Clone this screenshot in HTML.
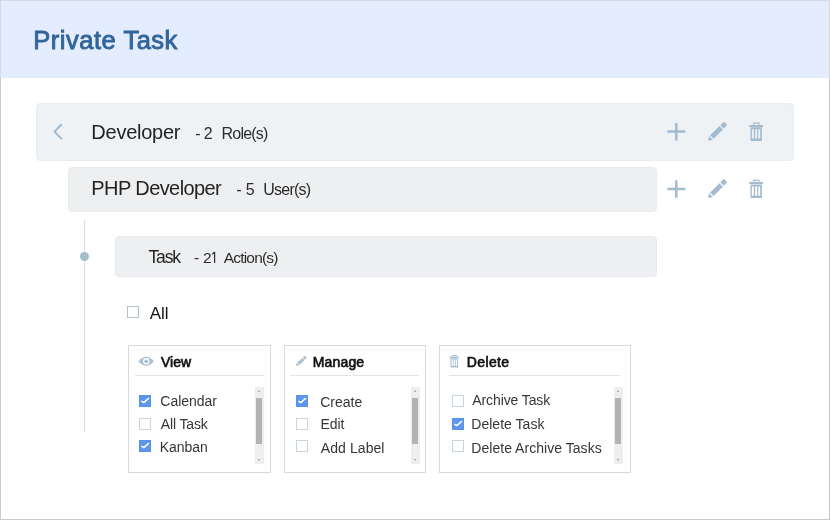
<!DOCTYPE html>
<html><head><meta charset="utf-8">
<style>
*{margin:0;padding:0;box-sizing:border-box}
html,body{width:830px;height:520px;overflow:hidden;background:#fff}
body{font-family:"Liberation Sans",sans-serif;color:#333;position:relative}
.a{position:absolute;white-space:nowrap;line-height:1}
#txt{position:absolute;left:0;top:0;width:830px;height:520px;will-change:transform}
svg.a{line-height:0}
#frame{position:absolute;left:0;top:0;width:830px;height:520px;border:1px solid #cacaca}
#hdr{position:absolute;left:0;top:0;width:830px;height:78px;background:#e4edfe;border:1px solid #d5dae2;border-bottom:0}
.bar{position:absolute;border-radius:4px}
#dev{left:36px;top:103px;width:758px;height:58px;background:#eff2f5;border:1px solid #e9edf1}
#php{left:68px;top:167px;width:589px;height:45px;background:#eeeff1;border:1px solid #e9ecef}
#task{left:115px;top:236px;width:542px;height:41px;background:#eeeff1;border:1px solid #e6eaee}
#tline{position:absolute;left:84px;top:220px;width:1px;height:212px;background:#d6dee5}
#tdot{position:absolute;left:80px;top:252px;width:9px;height:9px;border-radius:50%;background:#a2bdcb}
.cb{position:absolute;width:12px;height:12px;border:1px solid #c6d5e0;background:#fff}
.cb.on{background:#5c97eb;border-color:#5893e8}
.cb svg{position:absolute;left:-1px;top:-1px}
.box{position:absolute;top:345px;height:128px;border:1px solid #d9d9d9;background:#fff}
.sep{position:absolute;top:375px;height:1px;background:#e4e4e4}
.sb{position:absolute;top:387px;width:9px;height:77px;background:#eeeeee}
.sb .th{position:absolute;left:1px;top:11px;width:6px;height:46px;background:#b3b3b3}
.sb .up,.sb .dn{position:absolute;left:3px;width:0;height:0;border-left:1.5px solid transparent;border-right:1.5px solid transparent}
.sb .up{top:3px;border-bottom:2px solid #999}
.sb .dn{bottom:3px;border-top:2px solid #999}
</style></head><body>
<div id="frame"></div>
<div id="hdr"></div>

<div class="bar" id="dev"></div>
<svg class="a" style="left:46px;top:117px" width="24" height="30" viewBox="0 0 24 30"><path d="M15.1 7.8 L8.5 14.7 L15.3 21.6" fill="none" stroke="#a0bbd0" stroke-width="2" stroke-linecap="round" stroke-linejoin="round"/></svg>
<div class="bar" id="php"></div>

<div id="tline"></div>
<div id="tdot"></div>
<div class="bar" id="task"></div>

<div class="cb" style="left:127px;top:306px;border-color:#adc3d4"></div>

<div class="box" style="left:128px;width:143px"></div>
<div class="sep" style="left:135px;width:129px"></div>
<div class="sb" style="left:255px"><div class="up"></div><div class="th"></div><div class="dn"></div></div>
<div class="cb on" style="left:139px;top:395px"><svg width="12" height="12" viewBox="0 0 12 12"><path d="M2.8 6.3 L4.8 7.6 L9.6 3.4" fill="none" stroke="#fff" stroke-width="1.4" stroke-linecap="round" stroke-linejoin="round"/></svg></div>
<div class="cb" style="left:139px;top:418px"></div>
<div class="cb on" style="left:139px;top:440px"><svg width="12" height="12" viewBox="0 0 12 12"><path d="M2.8 6.3 L4.8 7.6 L9.6 3.4" fill="none" stroke="#fff" stroke-width="1.4" stroke-linecap="round" stroke-linejoin="round"/></svg></div>

<div class="box" style="left:284px;width:142px"></div>
<div class="sep" style="left:290px;width:129px"></div>
<div class="sb" style="left:410.5px"><div class="up"></div><div class="th"></div><div class="dn"></div></div>
<div class="cb on" style="left:296px;top:395px"><svg width="12" height="12" viewBox="0 0 12 12"><path d="M2.8 6.3 L4.8 7.6 L9.6 3.4" fill="none" stroke="#fff" stroke-width="1.4" stroke-linecap="round" stroke-linejoin="round"/></svg></div>
<div class="cb" style="left:296px;top:418px"></div>
<div class="cb" style="left:296px;top:440px"></div>

<div class="box" style="left:439px;width:192px"></div>
<div class="sep" style="left:449px;width:171px"></div>
<div class="sb" style="left:614px"><div class="up"></div><div class="th"></div><div class="dn"></div></div>
<div class="cb" style="left:452px;top:395px"></div>
<div class="cb on" style="left:452px;top:418px"><svg width="12" height="12" viewBox="0 0 12 12"><path d="M2.8 6.3 L4.8 7.6 L9.6 3.4" fill="none" stroke="#fff" stroke-width="1.4" stroke-linecap="round" stroke-linejoin="round"/></svg></div>
<div class="cb" style="left:452px;top:440px"></div>

<div id="txt">
<div class="a" style="left:33.24px;top:27.71px;font-size:25.5px;letter-spacing:0.52px;color:#32659b;-webkit-text-stroke:0.9px #32659b">Private Task</div>
<div class="a" style="left:91.37px;top:121.91px;font-size:20px;letter-spacing:-0.25px;color:#232323;">Developer</div>
<div class="a" style="left:195.27px;top:125.90px;font-size:16px;color:#2c2c2c;">-</div>
<div class="a" style="left:203.63px;top:125.90px;font-size:16px;color:#2c2c2c;">2</div>
<div class="a" style="left:221.59px;top:125.90px;font-size:16px;letter-spacing:-0.81px;color:#2c2c2c;">Role(s)</div>
<div class="a" style="left:91.37px;top:177.91px;font-size:20px;letter-spacing:-0.59px;color:#232323;">PHP Developer</div>
<div class="a" style="left:236.27px;top:181.90px;font-size:16px;color:#2c2c2c;">-</div>
<div class="a" style="left:245.84px;top:181.90px;font-size:16px;color:#2c2c2c;">5</div>
<div class="a" style="left:263.29px;top:181.90px;font-size:16px;letter-spacing:-0.77px;color:#2c2c2c;">User(s)</div>
<div class="a" style="left:148.41px;top:249.11px;font-size:17.5px;letter-spacing:-1.10px;color:#232323;">Task</div>
<div class="a" style="left:194.07px;top:250.10px;font-size:15.5px;color:#2c2c2c;">-</div>
<div class="a" style="left:202.99px;top:250.10px;font-size:15.5px;color:#2c2c2c;">2</div>
<div class="a" style="left:223.68px;top:250.10px;font-size:15.5px;letter-spacing:-0.80px;color:#2c2c2c;">Action(s)</div>
<div class="a" style="left:149.85px;top:304.72px;font-size:17px;letter-spacing:-0.13px;color:#151515;">All</div>
<div class="a" style="left:160.90px;top:355.10px;font-size:14px;letter-spacing:0.02px;color:#111;-webkit-text-stroke:0.65px #111">View</div>
<div class="a" style="left:312.80px;top:355.31px;font-size:14px;letter-spacing:0.14px;color:#111;-webkit-text-stroke:0.65px #111">Manage</div>
<div class="a" style="left:466.79px;top:355.31px;font-size:14px;letter-spacing:0.38px;color:#111;-webkit-text-stroke:0.65px #111">Delete</div>
<div class="a" style="left:160.36px;top:394.20px;font-size:14px;letter-spacing:-0.04px;color:#363636;">Calendar</div>
<div class="a" style="left:160.83px;top:417.10px;font-size:14px;letter-spacing:-0.15px;color:#363636;">All Task</div>
<div class="a" style="left:159.82px;top:440.01px;font-size:14px;letter-spacing:-0.05px;color:#363636;">Kanban</div>
<div class="a" style="left:320.20px;top:394.60px;font-size:14px;letter-spacing:0.01px;color:#363636;">Create</div>
<div class="a" style="left:320.62px;top:417.01px;font-size:14px;letter-spacing:-0.14px;color:#363636;">Edit</div>
<div class="a" style="left:320.86px;top:440.81px;font-size:14px;letter-spacing:0.07px;color:#363636;">Add Label</div>
<div class="a" style="left:472.32px;top:393.10px;font-size:14px;letter-spacing:-0.11px;color:#363636;">Archive Task</div>
<div class="a" style="left:471.26px;top:417.01px;font-size:14px;letter-spacing:0.03px;color:#363636;">Delete Task</div>
<div class="a" style="left:471.26px;top:440.81px;font-size:14px;letter-spacing:0.04px;color:#363636;">Delete Archive Tasks</div>
</div>

<svg class="a" style="left:0;top:0" width="830" height="520" viewBox="0 0 830 520">
<defs>
<g id="pen"><path d="M0 0 L4.1 -2.7 L4.1 2.7 Z M5.3 -2.45 H18.5 V2.45 H5.3 Z M19.7 -2.45 H23.2 A1.6 1.6 0 0 1 24.8 -0.85 V0.85 A1.6 1.6 0 0 1 23.2 2.45 H19.7 Z"/></g>
<g id="trash"><path fill-rule="evenodd" d="M3.8 0 H10.4 V2.4 H9.4 V1.2 H4.8 V2.4 H3.8 Z M0 2.3 H13.7 V4.3 H0 Z M1.3 4.6 H12.7 V18.3 H1.3 Z M2.7 6.7 V15.9 H4.6 V6.7 Z M6 6.7 V15.9 H7.9 V6.7 Z M9.1 6.7 V15.9 H11 V6.7 Z"/></g>
</defs>
<g fill="none" stroke="#a3bbcf" stroke-width="2.5" stroke-linecap="round">
<path d="M668.3 131.6 H684.3 M676.3 124 V139.5"/>
<path d="M668.3 188.9 H684.3 M676.3 181.2 V196.8"/>
</g>
<g fill="#a3bbcf">
<use href="#pen" transform="translate(708.1 140.8) rotate(-45)"/>
<use href="#pen" transform="translate(708.1 198) rotate(-45)"/>
<use href="#trash" transform="translate(749.2 122.6)"/>
<use href="#trash" transform="translate(749.2 179.8)"/>
</g>
<g fill="#a9c0d2">
<path d="M138.4 361.3 Q146.2 352.3 153.9 361.3 Q146.2 370.3 138.4 361.3 Z"/>
<path transform="translate(295.9 365.9) rotate(-42)" d="M0 0 L2.5 -1.75 L2.5 1.75 Z M3.2 -1.6 H10.2 V1.6 H3.2 Z M10.9 -1.6 H12.5 A1.1 1.1 0 0 1 13.6 -0.5 V0.5 A1.1 1.1 0 0 1 12.5 1.6 H10.9 Z"/>
<path fill-rule="evenodd" d="M452 355 H457 V357 H456.2 V355.9 H452.8 V357 H452 Z M449.5 356.5 H458.8 V358 H449.5 Z M450.4 358.3 H458 V367.4 H450.4 Z M451.5 359.6 V366.1 H452.8 V359.6 Z M453.6 359.6 V366.1 H454.9 V359.6 Z M455.7 359.6 V366.1 H457 V359.6 Z"/>
</g>
<circle cx="146.2" cy="361.3" r="3.2" fill="#fff"/>
<circle cx="146.2" cy="361.3" r="1.9" fill="#a9c0d2"/>
<path d="M214.6 251.9 V263.1 M214.6 252 L212.3 254.2" fill="none" stroke="#2c2c2c" stroke-width="1.2" stroke-linecap="butt"/>
</svg>
</body></html>
